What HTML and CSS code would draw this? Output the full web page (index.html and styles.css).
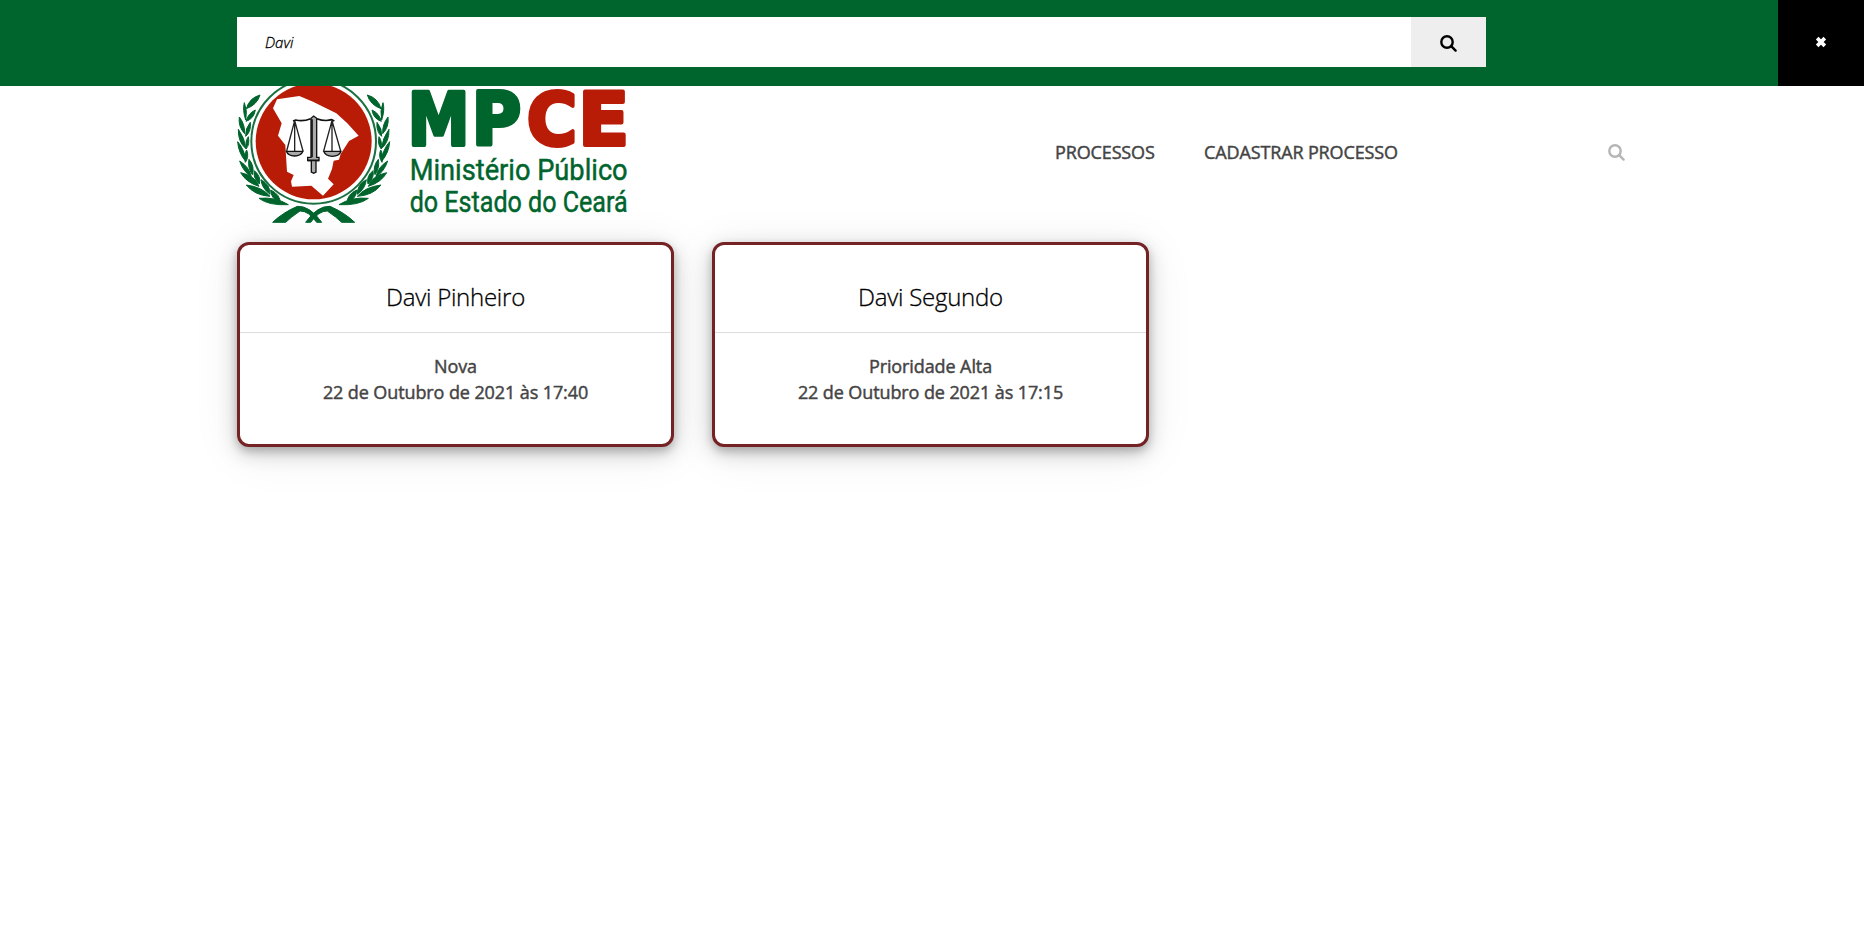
FILE: index.html
```html
<!DOCTYPE html>
<html lang="pt-BR">
<head>
<meta charset="utf-8">
<title>MPCE - Processos</title>
<link rel="stylesheet" href="styles.css">
</head>
<body>
<form class="search-bar">
  <div class="search-field">
    <input class="search-input" type="text" value="Davi" aria-label="Buscar">
    <button class="search-submit" type="button" aria-label="Buscar">
      <svg class="icon-search" viewBox="0 0 17 17"><circle cx="7" cy="7" r="5.7"/><path d="M11.2 11.2L15.6 15.6"/></svg>
    </button>
  </div>
  <button class="search-close" type="button" aria-label="Fechar">
    <svg class="icon-close" viewBox="0 0 11 11"><path d="M2 2L9 9M9 2L2 9"/></svg>
  </button>
</form>
<header class="header">
  <svg class="logo" viewBox="51 0 1176 462" role="img" aria-label="MPCE">
    <defs>
      <g id="laurel">
        <path d="M120 75Q88 84 79 116Q111 105 120 75ZM73 98Q67 120 77 150Q83 122 73 98ZM106 120Q84 130 78 154Q102 146 106 120ZM58 141Q54 170 74 191Q75 162 58 141ZM91 157Q75 176 77 199Q94 185 91 157ZM55 178Q54 216 77 235Q75 205 55 178ZM85 200Q75 214 78 237Q90 224 85 200ZM53 215Q55 248 77 274Q75 240 53 215ZM80 240Q71 253 76 277Q88 260 80 240ZM59 273Q70 306 94 320Q88 291 59 273ZM87 268Q82 293 97 314Q105 290 87 268ZM62 308Q78 337 117 349Q106 317 62 308ZM103 302Q98 323 118 342Q124 319 103 302ZM79 345Q103 376 150 379Q127 351 79 345ZM123 329Q125 354 150 373Q151 344 123 329ZM117 385Q146 407 205 404Q166 380 117 385ZM152 360Q152 385 181 400Q181 373 152 360Z"/>
        <path d="M158 457Q188 428 232 409Q270 407 305 457L290 457Q265 422 240 423Q212 442 197 457Z"/>
      </g>
    </defs>
    <circle class="ring" cx="281" cy="214" r="187"/>
    <circle class="disc" cx="281" cy="214" r="174"/>
    <path class="state" d="M171 88L238 78L279 95L349 130L382 160L416 197L387 213L362 252L357 269L341 272L336 297L324 326L341 343L309 377L274 347L216 350L213 334L221 315L201 305L196 225L174 197L185 160L159 115Z"/>
    <use class="leaf" href="#laurel"/>
    <use class="leaf" href="#laurel" transform="translate(562 0) scale(-1 1)"/>
    <path class="beam" d="M219 153L227 150Q250 155 272 146M290 146Q315 155 335 149L343 153"/>
    <path class="scale" d="M224 152L200 243M224 152L249 243M224 152V243M336 152L311 243M336 152L362 243M336 152V243"/>
    <path class="pan" d="M199 244H249Q243 258 224 258Q204 258 199 244ZM311 244H363Q358 259 337 259Q317 259 311 244Z"/>
    <path class="pan" d="M274 306V272H263V262H273V145L281 138L290 145V262H297V272H288V306L281 310Z"/>
    <path class="beam" d="M276 148V262M264 271H297"/>
    <g class="name">
      <text class="green" transform="translate(563.5 226) scale(.85 1)">M</text>
      <text class="green" transform="translate(755 226) scale(.925 1)">P</text>
      <text class="red" transform="translate(920 226) scale(.94 1)">C</text>
      <text class="red" transform="translate(1075 226) scale(1.02 1)">E</text>
    </g>
    <g class="tagline">
      <text x="569" y="330" textLength="654" lengthAdjust="spacingAndGlyphs">Ministério Público</text>
      <text x="569" y="426" textLength="654" lengthAdjust="spacingAndGlyphs">do Estado do Ceará</text>
    </g>
  </svg>
  <nav class="nav">
    <a class="nav-link nav-list">PROCESSOS</a>
    <a class="nav-link nav-new">CADASTRAR PROCESSO</a>
    <svg class="icon-search nav-search" viewBox="0 0 17 17"><circle cx="7" cy="7" r="5.7"/><path d="M11.2 11.2L15.6 15.6"/></svg>
  </nav>
</header>
<main class="cards">
  <article class="card">
    <h2 class="card-title">Davi Pinheiro</h2>
    <p class="card-text">Nova<br>22 de Outubro de 2021 às 17:40</p>
  </article>
  <article class="card">
    <h2 class="card-title">Davi Segundo</h2>
    <p class="card-text">Prioridade Alta<br>22 de Outubro de 2021 às 17:15</p>
  </article>
</main>
</body>
</html>
```

FILE: styles.css
```css
* { box-sizing: border-box; }
body { min-height: 940px; margin: 0; background: #fff; font-family: "Open Sans", "Noto Sans", sans-serif; color: #444; }
button, input { border: 0; border-radius: 0; margin: 0; outline: 0; font-family: inherit; }

.search-bar { display: flex; justify-content: space-between; height: 86px; padding-left: 237px; background: #00642d; }
.search-field { display: flex; width: 1249px; height: 50px; margin-top: 17px; }
.search-input { flex: 1; padding: 0 28px 1px; background: #fff; color: #000; font-size: 15px; font-style: italic; font-weight: 300; -webkit-text-stroke: .3px #000; }
.search-submit { display: flex; align-items: center; justify-content: center; width: 75px; padding: 2px 0 0; background: #eee; color: #000; }
.search-close { display: flex; align-items: center; justify-content: center; width: 86px; padding: 0 0 2px; background: #000; }
.icon-search { width: 17px; height: 17px; fill: none; stroke: currentColor; stroke-width: 2.4; stroke-linecap: round; }
.icon-close { width: 12px; height: 12px; stroke: #fff; stroke-width: 3.4; }

.header { display: flex; height: 156px; margin-top: -16px; padding-left: 237px; }
.logo { flex: none; width: 392px; height: 154px; clip-path: inset(16px 0 0 0); }
.ring { fill: #fff; stroke: #1a7040; stroke-width: 6; }
.disc { fill: #b81b06; }
.state { fill: #fff; }
.leaf { fill: #00642d; stroke: #00642d; stroke-width: 3; }
.beam { fill: none; stroke: #111; stroke-width: 5; }
.scale { fill: none; stroke: #222; stroke-width: 4; }
.pan { fill: #aaa; stroke: #111; stroke-width: 4; }
.name { font: bold 219px/1 "DejaVu Sans", sans-serif; stroke-width: 12; stroke-linejoin: round; }
.green { fill: #00642d; stroke: #00642d; }
.red { fill: #b81b06; stroke: #b81b06; }
.tagline { font: 400 91px/1 Roboto, sans-serif; fill: #00642d; stroke: #00642d; stroke-width: 1.5; }

.nav { display: flex; align-items: center; height: 32px; margin: 66px 0 0 426px; color: #444; }
.nav-link { font-size: 18px; font-weight: 400; line-height: 24px; white-space: nowrap; -webkit-text-stroke: .45px #444; }
.nav-list { width: 149px; letter-spacing: -.13px; }
.nav-new { width: 404px; letter-spacing: -.13px; }
.nav-search { color: #b5b5b5; }

.cards { display: flex; gap: 38px; margin-top: 16px; padding-left: 237px; }
.card { width: 437px; height: 205px; border: 3px solid #752225; border-radius: 12px; background: #fff; text-align: center; box-shadow: 0 4px 8px rgba(0,0,0,.2), 0 6px 20px rgba(0,0,0,.19), 0 6px 48px rgba(0,0,0,.08); }
.card-title { height: 88px; margin: 0; padding-top: 34px; border-bottom: 1px solid #ddd; color: #000; font-size: 24px; font-weight: 300; line-height: 36px; letter-spacing: -.25px; -webkit-text-stroke: .3px #000; }
.card-text { margin: 20px 0 0; font-size: 18px; font-weight: 400; line-height: 26px; letter-spacing: -.1px; -webkit-text-stroke: .45px #444; }
```
